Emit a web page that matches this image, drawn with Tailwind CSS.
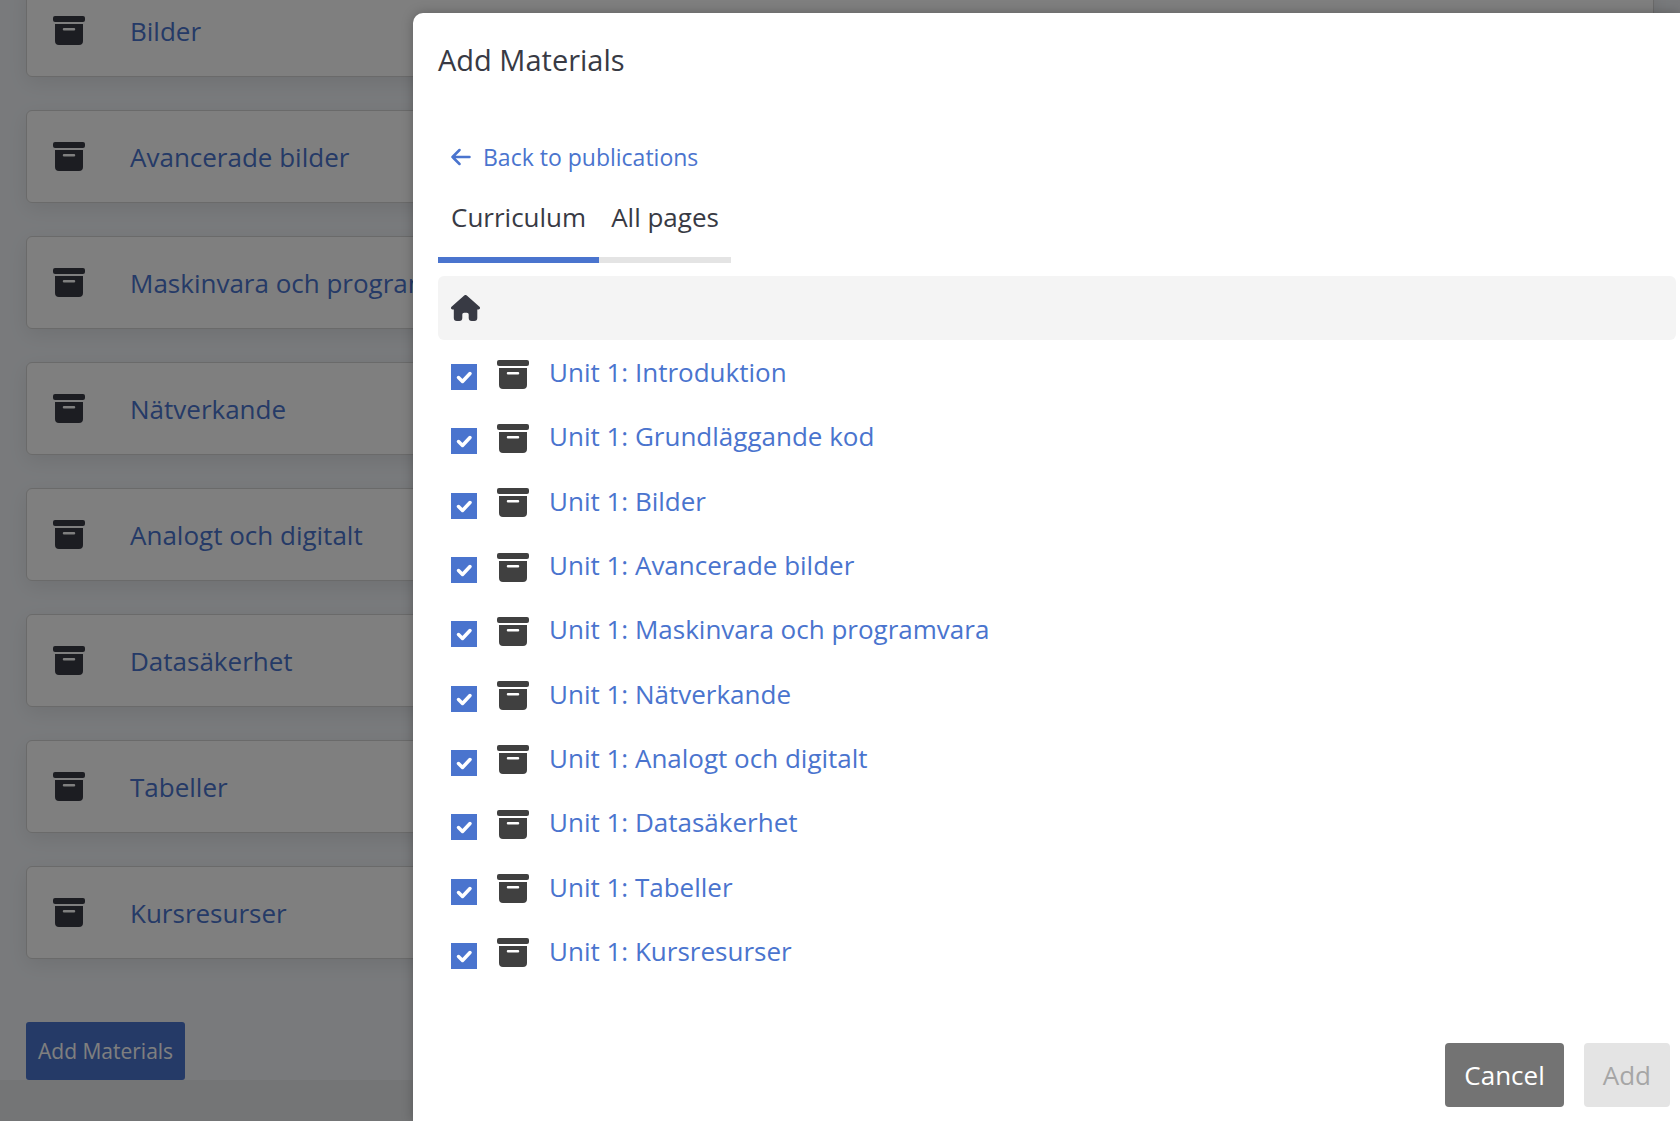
<!DOCTYPE html>
<html lang="sv">
<head>
<meta charset="utf-8">
<title>Add Materials</title>
<script src="https://cdn.jsdelivr.net/npm/@tailwindcss/browser@4"></script>
</head>
<body class="font-['Open_Sans',sans-serif] text-[#383a44] bg-[#e9eaec]">
<svg class="hidden">
  <symbol id="box" viewBox="0 0 32 29"><path d="M2 0h28a2 2 0 0 1 2 2v2a2 2 0 0 1-2 2H2a2 2 0 0 1-2-2V2a2 2 0 0 1 2-2z"/><path fill-rule="evenodd" d="M2 8h28v17a4 4 0 0 1-4 4H6a4 4 0 0 1-4-4zM11 12a1 1 0 0 0 0 2.500h10a1 1 0 0 0 0-2.500z"/></symbol>
</svg>
<div class="relative h-screen overflow-hidden">
  <main class="bg-[#f2f5f9] px-[26px] -mt-4">
    <ul id="cards" class="flex flex-col gap-[33px]"></ul>
    <button class="mt-[63px] h-[58px] px-3 rounded-[3px] bg-[#4a74ce] text-white text-[21px] leading-[30px] block">Add Materials</button>
  </main>
  <footer class="px-[131px] pt-8 text-[26px] leading-9"><a href="#" class="text-[#4a74ce]">lärarinfo om resursinfo</a></footer>
  <div class="absolute inset-0 bg-black/50 pt-[13px] pl-[413px]">
    <section role="dialog" aria-labelledby="title" class="h-full bg-white rounded-tl-[10px] pl-[25px] pr-1 pb-[14px] flex flex-col shadow-[0_0_12px_rgba(0,0,0,0.25)]">
      <h1 id="title" class="pt-[26px] text-[29px] leading-[42px]">Add Materials</h1>
      <a href="#" class="mt-[59px] ml-[13px] flex items-center gap-3 text-[23px] leading-[34px] text-[#4a74ce]">
        <svg class="w-5 h-[18px]" viewBox="0 0 20 18" fill="none" stroke="currentColor" stroke-width="2.500" stroke-linecap="round" stroke-linejoin="round"><path d="M18.500 9H1.500M8.500 2l-7 7 7 7"/></svg>Back to publications</a>
      <div role="tablist" class="mt-[19px] flex text-[26px] leading-10">
        <button role="tab" aria-selected="true" class="px-[13px] pt-1 pb-5 border-b-[6px] border-[#4a74ce]">Curriculum</button>
        <button role="tab" class="px-3 pt-1 pb-5 border-b-[6px] border-[#e4e4e4]">All pages</button>
      </div>
      <nav class="mt-[13px] h-16 shrink-0 rounded-[6px] bg-[#f4f4f4] px-[13px] flex items-center">
        <a href="#" aria-label="Home"><svg class="w-[29px] h-[26px]" viewBox="0 0 29 26" fill="#383a44"><path d="M13.200.5a2 2 0 0 1 2.600 0L28.500 11.700c1.100 1 .4 2.700-1 2.700H26.300v8.600a3 3 0 0 1-3 3h-2.600a3 3 0 0 1-3-3v-3.500a1.800 1.800 0 0 0-1.800-1.800h-2.800a1.800 1.800 0 0 0-1.800 1.800V23a3 3 0 0 1-3 3H5.800a3 3 0 0 1-3-3v-8.600H1.500c-1.400 0-2.100-1.700-1-2.700z"/></svg></a>
      </nav>
      <ul id="units" class="flex-1 mb-[60px] grid auto-rows-fr"></ul>
      <div class="flex justify-end gap-5 pr-[6px] text-[26px] leading-10">
        <button class="h-16 px-[19px] rounded-[4px] bg-[#737373] text-white">Cancel</button>
        <button disabled class="h-16 px-[19px] rounded-[4px] bg-[#e4e4e4] text-[#a6a6a6]">Add</button>
      </div>
    </section>
  </div>
</div>
<script>
const names = ['Introduktion','Grundläggande kod','Bilder','Avancerade bilder','Maskinvara och programvara','Nätverkande','Analogt och digitalt','Datasäkerhet','Tabeller','Kursresurser'];
document.getElementById('cards').innerHTML = names.slice(2).map(n => `
<li class="h-[93px] rounded-[6px] border border-[#d4d4d4] bg-white shadow-[0_6px_20px_rgba(0,0,0,0.08)] pl-[26px] flex items-center gap-[45px]">
<svg class="w-8 h-[29px] fill-[#383a44]"><use href="#box"/></svg><a href="#" class="text-[26px] leading-9 text-[#4a74ce]">${n}</a></li>`).join('');
document.getElementById('units').innerHTML = names.map((n, i) => `
<li class="pl-[13px] flex items-center">
<span class="relative mt-2.5 size-[26px]"><input id="u${i}" type="checkbox" checked class="appearance-none block size-[26px] bg-[#4a74ce]"><svg class="absolute inset-0 pointer-events-none" viewBox="0 0 26 26" fill="none" stroke="#fff" stroke-width="3.500" stroke-linecap="round" stroke-linejoin="round"><path d="M7.500 13.500l4 4 7.500-8"/></svg></span>
<svg class="ml-5 mt-1 w-8 h-[29px] fill-[#404040]"><use href="#box"/></svg>
<label for="u${i}" class="ml-5 text-[26px] leading-9 text-[#4a74ce]">Unit 1: ${n}</label></li>`).join('');
</script>
</body>
</html>
